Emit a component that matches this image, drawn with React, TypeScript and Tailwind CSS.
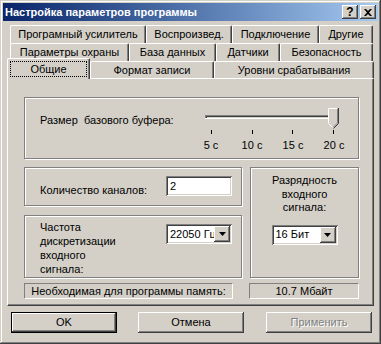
import React from "react";

const raised =
  "shadow-[inset_-1px_-1px_#404040,inset_1px_1px_#ffffff,inset_-2px_-2px_#808080,inset_2px_2px_#d4d0c8]";
const sunken =
  "shadow-[inset_1px_1px_#808080,inset_-1px_-1px_#ffffff,inset_2px_2px_#404040,inset_-2px_-2px_#d4d0c8]";
const etched = "border border-[#808080] shadow-[inset_1px_1px_#ffffff,1px_1px_#ffffff]";

function Tab({ label, className }: { label: string; className: string }) {
  return (
    <div
      className={`h-full flex items-center justify-center whitespace-nowrap border-t border-l border-r border-t-white border-l-white border-r-[#404040] rounded-t-[2px] shadow-[inset_-1px_0_#808080] ${className}`}
    >
      {label}
    </div>
  );
}

function Arrow() {
  return (
    <svg width="7" height="4" viewBox="0 0 7 4">
      <path d="M0 0h7L3.5 4z" fill="#000" />
    </svg>
  );
}

function Select({ value }: { value: string }) {
  return (
    <div className={`w-[66px] h-[20px] bg-white flex items-center p-[2px] ${sunken}`}>
      <span className="flex-1 overflow-hidden whitespace-nowrap pl-[2px] leading-none">{value}</span>
      <span className={`w-[16px] h-[16px] shrink-0 bg-[#d4d0c8] flex items-center justify-center ${raised}`}>
        <Arrow />
      </span>
    </div>
  );
}

function Slider() {
  const ticks = [20, 61, 101, 142];
  return (
    <div className="w-[164px] mt-[9px]">
      <svg width="164" height="28" viewBox="0 0 164 28">
        {/* channel */}
        <rect x="14" y="8" width="133" height="1" fill="#808080" />
        <rect x="14" y="8" width="1" height="4" fill="#808080" />
        <rect x="15" y="9" width="131" height="1" fill="#404040" />
        <rect x="15" y="9" width="1" height="2" fill="#404040" />
        <rect x="16" y="10" width="130" height="1" fill="#d4d0c8" />
        <rect x="14" y="11" width="133" height="1" fill="#ffffff" />
        <rect x="146" y="8" width="1" height="4" fill="#ffffff" />
        {/* thumb */}
        <path d="M137 1h10v15l-5 5l-5-5z" fill="#d4d0c8" />
        <path d="M137.5 16V1.5H146" stroke="#ffffff" fill="none" />
        <path d="M137.5 16.5l4.5 4.5" stroke="#ffffff" fill="none" />
        <path d="M147.5 1v15.5l-5 5" stroke="#404040" fill="none" />
        <path d="M146.5 2v14l-4.5 4.5" stroke="#808080" fill="none" />
        {ticks.map((t) => (
          <rect key={t} x={t} y="23" width="1" height="4" fill="#000" />
        ))}
      </svg>
      <div className="flex -ml-[0.5px] mt-[4px]">
        {["5 с", "10 с", "15 с", "20 с"].map((l) => (
          <span key={l} className="w-[41px] text-center leading-[12px]">
            {l}
          </span>
        ))}
      </div>
    </div>
  );
}

export default function App() {
  return (
    <div className="w-[381px] h-[344px] bg-[#d4d0c8] p-[3px] text-[11px] text-black font-['Liberation_Sans',Arial,sans-serif] shadow-[inset_-1px_-1px_#404040,inset_1px_1px_#d4d0c8,inset_-2px_-2px_#808080,inset_2px_2px_#ffffff] select-none">
      {/* title bar */}
      <div className="h-[18px] flex items-center pl-[2px] pr-[2px] bg-gradient-to-r from-[#0a246a] to-[#a6caf0]">
        <span className="flex-1 text-white font-bold whitespace-nowrap">Настройка параметров программы</span>
        <div className={`w-[16px] h-[14px] bg-[#d4d0c8] flex items-center justify-center font-bold text-[12px] leading-none ${raised}`}>
          ?
        </div>
        <div className={`w-[16px] h-[14px] ml-[2px] bg-[#d4d0c8] flex items-center justify-center ${raised}`}>
          <svg width="8" height="7" viewBox="0 0 8 7">
            <path d="M0 0h2l2 2l2-2h2L5 3.5L8 7H6L4 5L2 7H0l3-3.5z" fill="#000" />
          </svg>
        </div>
      </div>

      {/* tabs */}
      <div className="ml-[4px] w-[367px]">
        <div className="flex h-[18px] mt-[4px] ml-[3px]">
          <Tab label="Програмный усилитель" className="w-[136px]" />
          <Tab label="Воспроизвед." className="w-[86px]" />
          <Tab label="Подключение" className="w-[87px]" />
          <Tab label="Другие" className="w-[54px]" />
        </div>
        <div className="flex h-[18px] ml-[3px]">
          <Tab label="Параметры охраны" className="w-[119px]" />
          <Tab label="База данных" className="w-[87px]" />
          <Tab label="Датчики" className="w-[64px]" />
          <Tab label="Безопасность" className="w-[93px]" />
        </div>
        <div className="flex items-end h-[17px]">
          <div className="relative z-10 -mb-px w-[83px] h-[21px] bg-[#d4d0c8] border-t border-l border-r border-t-white border-l-white border-r-[#404040] rounded-t-[2px] shadow-[inset_-1px_0_#808080] p-[2px]">
            <div className="h-full flex items-center justify-center border border-dotted border-black">Общие</div>
          </div>
          <Tab label="Формат записи" className="w-[124px]" />
          <Tab label="Уровни срабатывания" className="w-[160px]" />
        </div>

        {/* panel */}
        <div className="h-[228px] border-t border-l border-r border-b border-t-white border-l-white border-r-[#404040] border-b-[#404040] shadow-[inset_-1px_-1px_#808080] pl-[16px] pt-[18px]">
          <div className={`w-[335px] h-[62px] ${etched} flex items-start pl-[15px]`}>
            <span className="mt-[14px] w-[151px] whitespace-pre">Размер  базового буфера:</span>
            <Slider />
          </div>

          <div className="flex gap-[8px] mt-[8px]">
            <div className="w-[218px] flex flex-col gap-[9px]">
              <div className={`h-[39px] ${etched} flex items-start pl-[15px]`}>
                <span className="mt-[14px] w-[126px]">Количество каналов:</span>
                <div className={`mt-[8px] w-[66px] h-[20px] bg-white flex items-center pl-[4px] ${sunken}`}>2</div>
              </div>
              <div className={`h-[63px] ${etched} flex items-start pl-[15px]`}>
                <span className="mt-[4px] w-[126px] leading-[14px]">
                  Частота
                  <br />
                  дискретизации
                  <br />
                  входного
                  <br />
                  сигнала:
                </span>
                <div className="mt-[8px]">
                  <Select value="22050 Гц" />
                </div>
              </div>
            </div>
            <div className={`w-[109px] h-[111px] ${etched} flex flex-col items-center`}>
              <span className="mt-[6px] text-center leading-[13.5px]">
                Разрядность
                <br />
                входного
                <br />
                сигнала:
              </span>
              <div className="mt-[10px]">
                <Select value="16 Бит" />
              </div>
            </div>
          </div>

          <div className="flex mt-[5px] h-[16px]">
            <div className="w-[209px] h-full flex items-center justify-center border-t border-l border-b border-r border-t-[#808080] border-l-[#808080] border-b-white border-r-white">
              Необходимая для программы память:
            </div>
            <div className="w-[110px] ml-[16px] h-full flex items-center justify-center border-t border-l border-b border-r border-t-[#808080] border-l-[#808080] border-b-white border-r-white">
              10.7 Мбайт
            </div>
          </div>
        </div>
      </div>

      {/* buttons */}
      <div className="flex mt-[6px] ml-[8px]">
        <div className="w-[106px] h-[21px] border border-black">
          <div className={`w-full h-full flex items-center justify-center ${raised}`}>OK</div>
        </div>
        <div className={`w-[106px] h-[21px] ml-[21px] flex items-center justify-center ${raised}`}>Отмена</div>
        <div className={`w-[106px] h-[21px] ml-[22px] flex items-center justify-center text-[#808080] [text-shadow:1px_1px_#ffffff] ${raised}`}>
          Применить
        </div>
      </div>
    </div>
  );
}
